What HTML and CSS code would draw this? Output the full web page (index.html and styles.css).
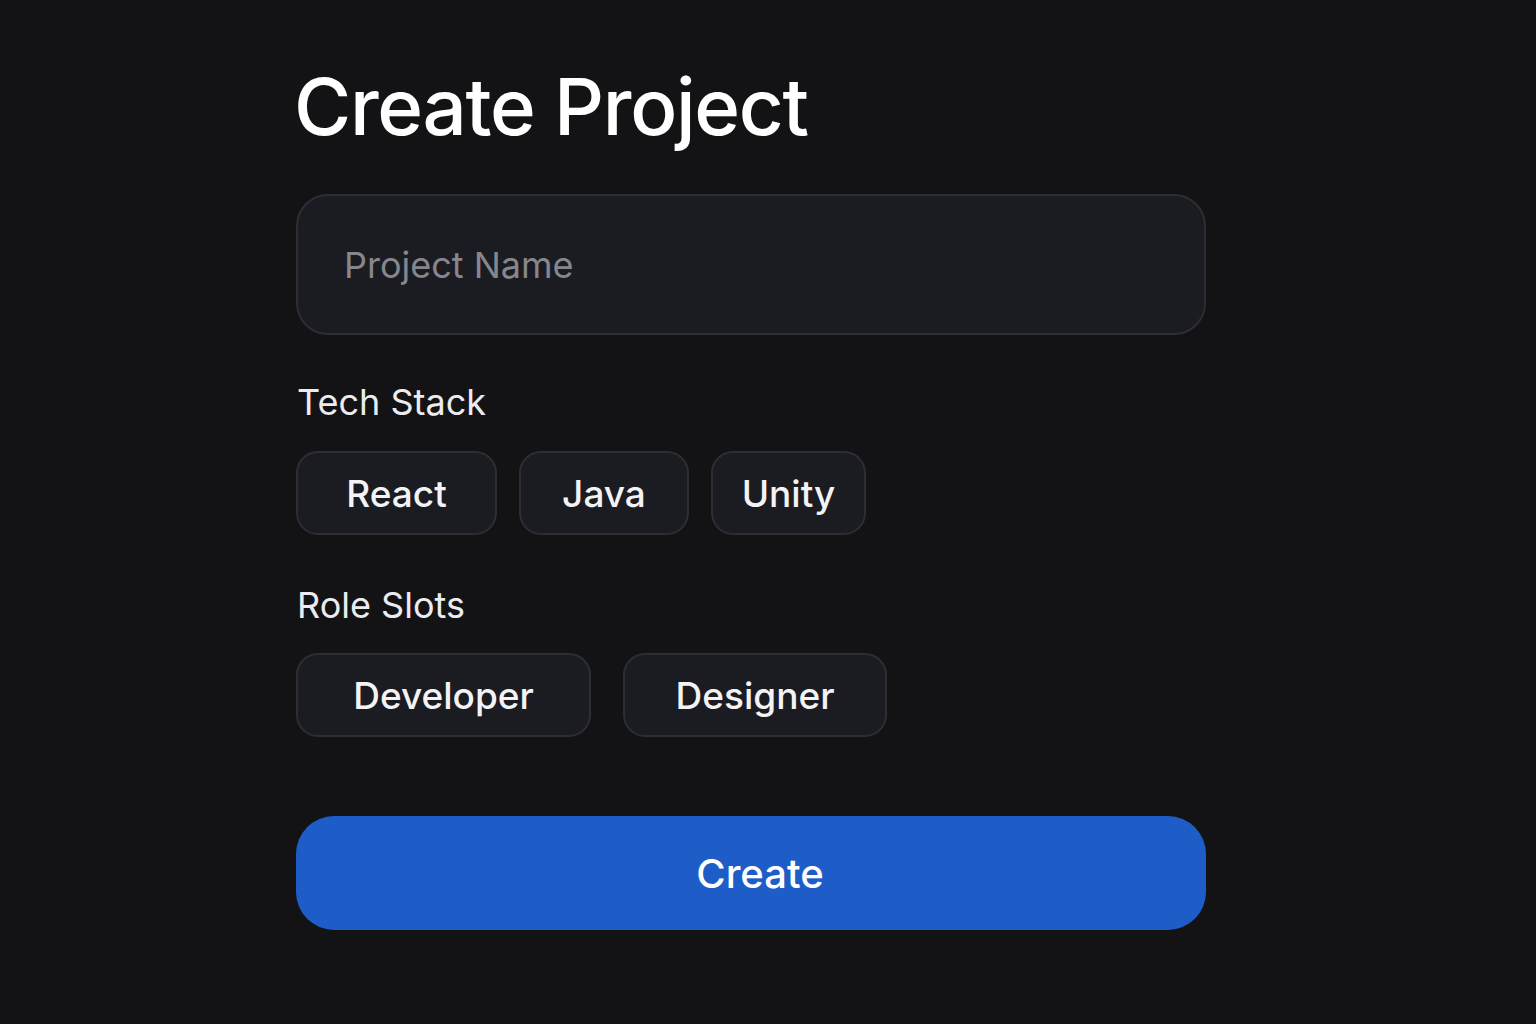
FILE: index.html
```html
<!DOCTYPE html>
<html lang="en">
<head>
<meta charset="utf-8">
<title>Create Project</title>
<link rel="stylesheet" href="styles.css">
</head>
<body>
<main class="form">
  <h1 class="title">Create Project</h1>
  <div class="input"><span class="placeholder">Project Name</span></div>
  <h2 class="label label-tech">Tech Stack</h2>
  <div class="chips chips-tech">
    <div class="chip chip-react">React</div>
    <div class="chip chip-java">Java</div>
    <div class="chip chip-unity">Unity</div>
  </div>
  <h2 class="label label-role">Role Slots</h2>
  <div class="chips chips-role">
    <div class="chip chip-dev">Developer</div>
    <div class="chip chip-des">Designer</div>
  </div>
  <button class="create">Create</button>
</main>
</body>
</html>
```
FILE: styles.css
```css
html, body {
  margin: 0;
  padding: 0;
  background: #131316;
  font-family: Inter, "Noto Sans", sans-serif;
  color: #f3f3f5;
}
.form {
  width: 910px;
  margin-left: 296px;
  padding-top: 57px;
  display: flex;
  flex-direction: column;
}
.title {
  margin: 0 0 0 -2px;
  font-size: 78px;
  font-weight: 500;
  line-height: 100px;
  letter-spacing: -1.3px;
  color: #ffffff;
}
.input {
  margin-top: 37px;
  height: 141px;
  box-sizing: border-box;
  border: 2px solid #2d2e34;
  border-radius: 32px;
  background: #1b1c21;
  display: flex;
  align-items: center;
  padding-left: 46px;
}
.placeholder {
  font-size: 36px;
  color: #86878d;
}
.label {
  margin: 0;
  font-size: 36px;
  font-weight: 400;
  line-height: 44px;
  color: #ececef;
  padding-left: 1px;
}
.label-tech { margin-top: 45px; }
.label-role { margin-top: 48px; }
.chips {
  display: flex;
}
.chips-tech { gap: 22px; margin-top: 27px; }
.chips-role { gap: 32px; margin-top: 26px; }
.chip {
  height: 84px;
  box-sizing: border-box;
  border: 2px solid #2d2e34;
  border-radius: 22px;
  background: #1b1c21;
  display: flex;
  align-items: center;
  justify-content: center;
  font-size: 37px;
  font-weight: 500;
  color: #f3f3f5;
}
.chip-react { width: 201px; }
.chip-java { width: 170px; }
.chip-unity { width: 155px; }
.chip-dev { width: 295px; }
.chip-des { width: 264px; }
.create {
  margin-top: 79px;
  height: 114px;
  border: none;
  border-radius: 38px;
  background: #1e5dc7;
  color: #ffffff;
  font-family: Inter, "Noto Sans", sans-serif;
  font-size: 40px;
  font-weight: 500;
  padding-left: 24px;
  cursor: pointer;
}
```
